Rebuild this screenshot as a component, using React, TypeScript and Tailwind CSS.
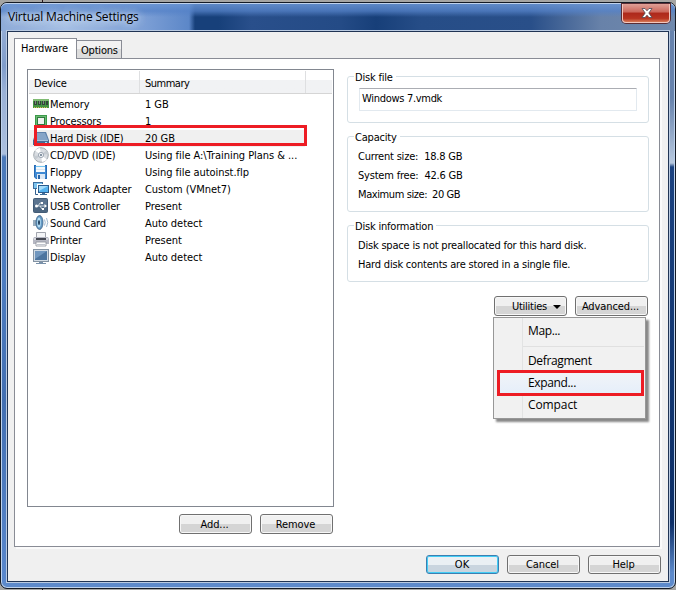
import type { ReactNode } from "react";

const devices = [
  { name: "Memory", summary: "1 GB", icon: "memory" },
  { name: "Processors", summary: "1", icon: "cpu" },
  { name: "Hard Disk (IDE)", summary: "20 GB", icon: "disk" },
  { name: "CD/DVD (IDE)", summary: "Using file A:\\Training Plans & ...", icon: "cd" },
  { name: "Floppy", summary: "Using file autoinst.flp", icon: "floppy" },
  { name: "Network Adapter", summary: "Custom (VMnet7)", icon: "network" },
  { name: "USB Controller", summary: "Present", icon: "usb" },
  { name: "Sound Card", summary: "Auto detect", icon: "sound" },
  { name: "Printer", summary: "Present", icon: "printer" },
  { name: "Display", summary: "Auto detect", icon: "display" },
];

const icons: Record<string, ReactNode> = {
  memory: (
    <>
      <path d="M0 3h16v9H0z" fill="#439443" />
      <path d="M0 3h16v2H0z" fill="#7fbb72" />
      <path d="M1 5h3v4H1zM5 5h3v4H5zM9 5h3v4H9zM13 5h2v4h-2z" fill="#34463a" />
      <path d="M2 5h1v3H2zM6 5h1v3H6zM10 5h1v3h-1z" fill="#7c8a80" />
      <path d="M1 11h1v1H1zM3 11h1v1H3zM5 11h1v1H5zM7 11h1v1H7zM9 11h1v1H9zM11 11h1v1h-1zM13 11h1v1h-1z" fill="#d5bd58" />
    </>
  ),
  cpu: (
    <>
      <path d="M2 2h12v12H2z" fill="#3c9a4a" />
      <path d="M3 3h10v10H3z" fill="#6bba73" />
      <path d="M4 4h8v8H4z" fill="#2f7b3e" />
      <path d="M5 5h6v6H5z" fill="#f0f2f0" />
    </>
  ),
  disk: (
    <>
      <path d="M3 2h10l3 8v4H0v-4z" fill="#5f82ab" />
      <path d="M4 3h8l3 7H1z" fill="#86a5c8" />
      <path d="M0 10h16v5H0z" fill="#476b95" />
      <path d="M1 10h14v1H1z" fill="#a9c1db" />
      <path d="M12 12h2v1h-2z" fill="#8be9ff" />
    </>
  ),
  cd: (
    <>
      <circle cx="8" cy="8" r="7.3" fill="#d9dde2" stroke="#8d959d" strokeWidth="0.8" />
      <path d="M8 8 2 3.5A8 8 0 0 1 7 1zM8 8l6 4.5A8 8 0 0 1 9 15z" fill="#fff" />
      <path d="M8 8 14 3a8 8 0 0 1 1 4zM8 8 2 13a8 8 0 0 1-1-4z" fill="#c5cbd1" />
      <circle cx="8" cy="8" r="2.6" fill="#eff2f5" stroke="#8d98a6" strokeWidth="0.8" />
      <circle cx="8" cy="8" r="1" fill="#637489" />
    </>
  ),
  floppy: (
    <>
      <path d="M1 1h13v14H3l-2-2z" fill="#286bb5" />
      <path d="M2 2h11v12H3l-1-1z" fill="#3f8ad4" />
      <path d="M3 1h9v7H3z" fill="#f6f9fc" />
      <path d="M3 2h9v1H3z" fill="#75c4ee" />
      <path d="M3 5h9v1H3z" fill="#dce7f1" />
      <path d="M4 10h8v5H4z" fill="#dbe8f5" />
      <path d="M5 11h2v4H5z" fill="#2a66a9" />
    </>
  ),
  network: (
    <>
      <path d="M0 1h10v7H0z" fill="#3c6d9d" />
      <path d="M1 2h8v5H1z" fill="#7cc3ee" />
      <path d="M4 3h12v10H4z" fill="#fff" />
      <path d="M5 4h11v8H5z" fill="#2b5c8d" />
      <path d="M6 5h9v6H6z" fill="#55b2ee" />
      <path d="M6 5h9L6 10z" fill="#a4dcfb" />
      <path d="M9 12h3v1h2v1H7v-1h2z" fill="#406d98" />
      <path d="M2.500 8v5.500H5" fill="none" stroke="#315f8f" />
    </>
  ),
  usb: (
    <>
      <rect x="0.500" y="0.500" width="14" height="14" rx="1" fill="#4c6681" stroke="#435c77" />
      <path d="M1 1h13v6H1z" fill="#5b748f" />
      <path d="M3 8h9M5 8l2-3h2M7 8l2 3h2" fill="none" stroke="#dfe6ec" strokeWidth="0.9" />
      <circle cx="3.500" cy="8" r="1.500" fill="#fff" />
      <path d="m11.500 6 2.500 2-2.500 2zM8 4h2v2H8zM9 10h2v2H9z" fill="#fff" />
    </>
  ),
  sound: (
    <>
      <path d="M0 5h3l5-5v15l-5-4H0z" fill="#9aaebf" />
      <ellipse cx="6.500" cy="7.500" rx="3.500" ry="7" fill="#6499c4" stroke="#3c6389" strokeWidth="0.8" />
      <ellipse cx="6" cy="7.500" rx="1.800" ry="5" fill="#b4ddf4" />
      <ellipse cx="6" cy="7.500" rx="1" ry="2.500" fill="#22415f" />
      <path d="M11.500 4.500q1.500 3 0 6M13.500 3q2.500 4.500 0 9" fill="none" stroke="#85a5c1" strokeWidth="0.8" />
    </>
  ),
  printer: (
    <>
      <path d="M3.500 .5h9V6h-9z" fill="#f4f5f7" stroke="#8c8f9a" strokeWidth="0.8" />
      <path d="M1 5h14l1 2v5H0V7z" fill="#b6b8c3" />
      <path d="M1 6h14v2H1z" fill="#d6d7dd" />
      <path d="M3 6h10v2H3z" fill="#454852" />
      <path d="M3 10h10v4H3z" fill="#fff" stroke="#8c8f9a" strokeWidth="0.8" />
      <path d="M4 12h8v1H4z" fill="#c2c6cf" />
    </>
  ),
  display: (
    <>
      <path d="M0 0h16v13H0z" fill="#8493a3" />
      <path d="M1 1h14v11H1z" fill="#d1dbe4" />
      <path d="M2 2h12v9H2z" fill="#4d759f" />
      <path d="M2 2h12L2 10z" fill="#7197bf" />
      <path d="M6 13h4v1h3v1H3v-1h3z" fill="#7890a9" />
    </>
  ),
};

const Icon = ({ name }: { name: string }) => (
  <svg viewBox="0 0 16 16" className="-mt-px h-4 w-4 shrink-0">
    {icons[name]}
  </svg>
);

const Button = ({ children, primary = false }: { children: ReactNode; primary?: boolean }) => (
  <button
    className={
      primary
        ? "flex h-full w-[73px] items-center justify-center rounded-[3px] border border-[#3c7fb1] bg-linear-to-b from-[#eaf0f4] from-50% to-[#c9d5df] to-50% pt-[2px] pr-px shadow-[inset_0_0_0_1px_#43cdf5]"
        : "flex h-full w-[73px] items-center justify-center rounded-[3px] border border-[#707070] bg-linear-to-b from-[#f0f0f0] from-50% to-[#d5d5d5] to-50% pt-[2px] pr-[2px] tracking-[-0.1px] shadow-[inset_0_0_0_1px_#f7f7f7]"
    }
  >
    {children}
  </button>
);

const Group = ({ title, className, children }: { title: string; className: string; children: ReactNode }) => (
  <section className={`w-[302px] rounded-[3px] border border-[#d5dfe5] ${className}`}>
    <h2 className="-mt-[8px] ml-[6px] h-[15px] w-fit bg-white pr-[3px] pl-px leading-[17px] tracking-[-0.2px]">{title}</h2>
    {children}
  </section>
);

const MenuItem = ({ children }: { children: ReactNode }) => (
  <div className="h-[22px] pl-[34px] leading-[22px]">{children}</div>
);

const App = () => {
  return (
    <div className="h-[590px] w-[676px] overflow-hidden bg-[linear-gradient(90deg,#a5a5a3_42px,#2a1518_42px,#2a1518_43px,#a5a5a3_43px)] pt-[2px] text-[11px] whitespace-nowrap text-black [font-family:'DejaVu_Sans_Condensed','DejaVu_Sans',sans-serif] [font-stretch:condensed]">
      <div className="h-[587px] w-[676px] rounded-[7px] border border-[#151b25] bg-[linear-gradient(180deg,#6783ad_0,#6783ad_95px,#b8c9df_160px,#1b4280_164px,#0c2e66_520px,#5d8acb_570px)] shadow-[inset_0_0_0_1px_#bed2ec]">
        <div className="flex h-[28px] justify-between rounded-t-[6px] border-t border-[#bfd2ec] bg-[linear-gradient(180deg,rgba(105,148,210,0.85)_0,rgba(85,130,200,0.75)_7px,transparent_13px),linear-gradient(90deg,#8eabd8_0,#a5bfe4_65px,#7b9ed5_145px,#5c87c8_188px,#17407a_194px,#17407a_218px,#294f8b_250px,#244b86_340px,#173f79_375px,#264d87_420px,#294f89_530px,#6882a9_600px,#7089ad_675px)]">
          <h1 className="pt-[1px] pl-[7px] text-[12px] leading-[24px] tracking-[-0.18px] [font-family:'Open_Sans',sans-serif] [font-stretch:normal] [text-shadow:0_0_8px_#d7e5f8,0_0_8px_#d7e5f8]">
            Virtual Machine Settings
          </h1>
          <button aria-label="Close" className="mr-[5px] flex h-[19px] w-[48px] items-center justify-center rounded-b-[4px] border border-t-0 border-[#f3c6bd] bg-[linear-gradient(180deg,#dea097_0,#cb665a_45%,#ad281b_50%,#b83421_80%,#d67956_100%)] shadow-[0_0_0_1px_#592d35]">
            <svg viewBox="0 0 12 10" className="-mt-px ml-[2px] h-[10px] w-[12px]">
              <path d="M1 .5h3l2 2.300L8 .5h3L7.800 5 11 9.500H8L6 7.200 4 9.500H1L4.200 5z" fill="#fff" stroke="#4c4855" strokeWidth="0.8" />
            </svg>
          </button>
        </div>
        <div className="flex">
          <div className="h-[551px] w-[6px] bg-[linear-gradient(180deg,#93acd4_0,#809dcb_35px,#9ab1d6_60px,#abbfde_123px,#4b79b9_126px,#4d7cc0_250px,#426fb2_370px,#5a88cd_551px)] shadow-[inset_1px_0_0_#bed2ec]" />
          <main className="h-[551px] w-[662px] border border-[#203454] bg-[#f0f0f0] pt-[6px] pl-[6px] shadow-[0_0_0_1px_#b9cae1]">
            <div className="flex h-[20px] items-end">
              <div className="z-10 -mb-px h-[21px] w-[63px] border border-b-0 border-[#898c95] bg-white pl-[6px] leading-[19px] tracking-[-0.1px]">
                Hardware
              </div>
              <div className="h-[18px] w-[45px] border border-b-0 border-l-0 border-[#898c95] bg-linear-to-b from-[#f2f2f2] from-50% to-[#dddddd] to-50% pl-[4px] leading-[19px] tracking-[-0.2px]">
                Options
              </div>
            </div>
            <div className="flex h-[489px] w-[646px] border border-[#898c95] bg-white shadow-[2px_2px_0_#fafafa]">
              <div className="pt-[10px] pl-[12px]">
                <div className="h-[438px] w-[307px] border border-[#828790] px-px pt-px">
                  <div className="flex h-[23px] border-b border-[#d5d5d5] bg-linear-to-b from-white from-40% to-[#f1f2f4] to-40% leading-[25px]">
                    <div className="w-[111px] border-r border-[#dedfe1] pl-[5px] tracking-[-0.2px]">Device</div>
                    <div className="w-[166px] border-r border-[#dedfe1] pl-[5px] tracking-[-0.5px]">Summary</div>
                  </div>
                  <div className="pt-[2px]">
                    {devices.map((device) => (
                      <div
                        key={device.name}
                        className={
                          device.icon === "disk"
                            ? "relative flex h-[17px] w-[276px] items-center bg-[#f0f0f0] pl-[4px]"
                            : "flex h-[17px] items-center pl-[4px]"
                        }
                      >
                        <Icon name={device.icon} />
                        <div className="w-[96px] pt-[2px] pl-px tracking-[-0.15px]">{device.name}</div>
                        <div className="pt-[2px] tracking-[-0.05px]">{device.summary}</div>
                        {device.icon === "disk" && (
                          <div className="absolute -top-[5px] left-[5px] h-[21px] w-[273px] border-3 border-[#ed1c24]" />
                        )}
                      </div>
                    ))}
                  </div>
                </div>
                <div className="mt-[7px] mr-px flex h-[20px] justify-end gap-[8px]">
                  <Button>Add...</Button>
                  <Button>Remove</Button>
                </div>
              </div>
              <div className="flex w-[315px] flex-col pt-[17px] pl-[13px]">
                <Group title="Disk file" className="h-[47px]">
                  <div className="mt-[4px] ml-[11px] h-[23px] w-[278px] rounded-[1px] border border-[#e2e9ef] border-t-[#abadb3] pl-[2px] leading-[20px] tracking-[-0.3px]">
                    Windows 7.vmdk
                  </div>
                </Group>
                <Group title="Capacity" className="mt-[13px] h-[76px]">
                  <div className="mt-[3px] pl-[10px] leading-[19px] tracking-[-0.2px]">
                    <p><span className="mr-[3px]">Current size:</span> <span>18.8 GB</span></p>
                    <p><span className="mr-[3px]">System free:</span> <span>42.6 GB</span></p>
                    <p className="tracking-[-0.4px]"><span className="mr-[2px]">Maximum size:</span> <span>20 GB</span></p>
                  </div>
                </Group>
                <Group title="Disk information" className="mt-[13px] h-[57px]">
                  <div className="mt-[3px] pl-[10px] leading-[19px] tracking-[-0.2px]">
                    <p>Disk space is not preallocated for this hard disk.</p>
                    <p>Hard disk contents are stored in a single file.</p>
                  </div>
                </Group>
                <div className="relative mt-[14px] flex h-[20px] w-[301px] justify-end gap-[8px]">
                  <Button>
                    <span className="pl-[14px] tracking-[-0.25px]">Utilities</span>
                    <svg viewBox="0 0 8 4" className="-mt-px ml-[6px] h-[4px] w-[8px]"><path d="M0 0h8L4 4z" /></svg>
                  </Button>
                  <Button>Advanced...</Button>
                  <div className="absolute top-[21px] right-[2px] h-[102px] w-[153px] border border-[#979797] bg-[linear-gradient(90deg,#f1f1f1_28px,#e2e3e3_28px,#e2e3e3_29px,#f1f1f1_29px)] pt-[2px] text-[12px] tracking-[-0.35px] shadow-[3px_3px_2px_#888] [font-family:'Open_Sans',sans-serif] [font-stretch:normal]">
                    <MenuItem>Map...</MenuItem>
                    <div className="mt-[4px] mr-px mb-[3px] ml-[29px] h-px bg-[#e0e0e0]" />
                    <MenuItem>Defragment</MenuItem>
                    <div className="relative mx-[3px] h-[22px] bg-linear-to-b from-[#f1f4f8] to-[#e5eefa] pl-[31px] leading-[22px]">
                      Expand...
                      <div className="absolute -top-[2px] left-0 h-[26px] w-[147px] border-3 border-[#ed1c24]" />
                    </div>
                    <MenuItem><span className="tracking-[-0.1px]">Compact</span></MenuItem>
                  </div>
                </div>
              </div>
            </div>
            <footer className="mt-[8px] flex h-[19px] w-[647px] justify-end gap-[8px]">
              <Button primary>OK</Button>
              <Button>Cancel</Button>
              <Button>Help</Button>
            </footer>
          </main>
        </div>
      </div>
    </div>
  );
};

export default App;
